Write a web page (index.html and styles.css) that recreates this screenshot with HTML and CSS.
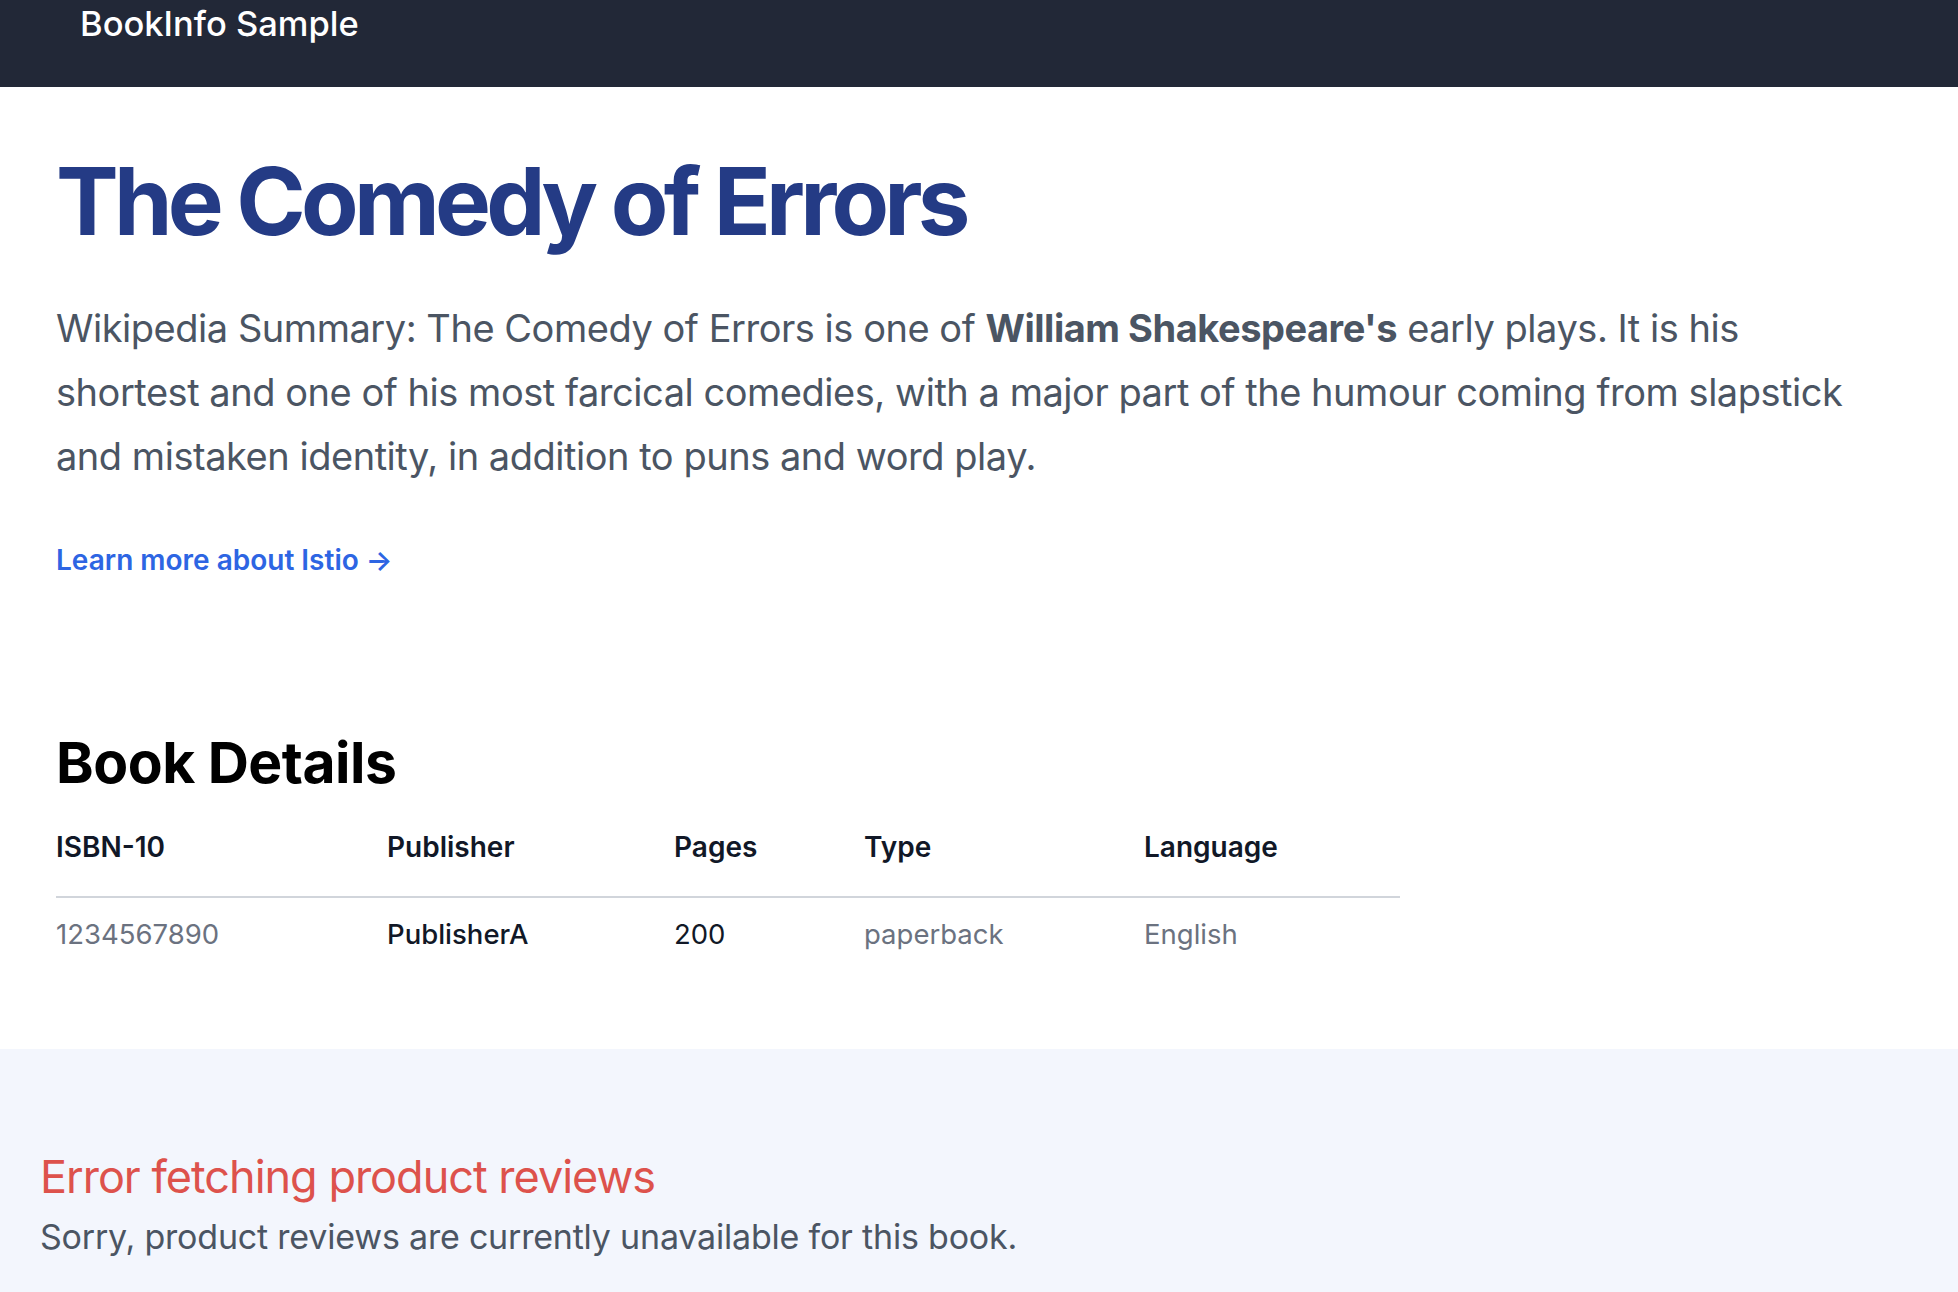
FILE: index.html
```html
<!DOCTYPE html>
<html lang="en">
<head>
<meta charset="utf-8">
<title>BookInfo Sample</title>
<link rel="stylesheet" href="styles.css">
</head>
<body>
<header class="navbar">
  <span class="brand">BookInfo Sample</span>
</header>
<main class="product">
  <h1 class="title">The Comedy of Errors</h1>
  <p class="summary">Wikipedia Summary: The Comedy of Errors is one of <strong>William Shakespeare's</strong> early plays. It is his shortest and one of his most farcical comedies, with a major part of the humour coming from slapstick and mistaken identity, in addition to puns and word play.</p>
  <a class="learn" href="#">Learn more about Istio <span class="arrow">→</span></a>
  <h2 class="details-title">Book Details</h2>
  <table class="details">
    <colgroup>
      <col class="c1"><col class="c2"><col class="c3"><col class="c4"><col class="c5">
    </colgroup>
    <thead>
      <tr><th>ISBN-10</th><th>Publisher</th><th>Pages</th><th>Type</th><th>Language</th></tr>
    </thead>
    <tbody>
      <tr><td class="muted">1234567890</td><td class="strong">PublisherA</td><td class="dark">200</td><td class="muted">paperback</td><td class="muted">English</td></tr>
    </tbody>
  </table>
</main>
<section class="reviews">
  <h3 class="error">Error fetching product reviews</h3>
  <p class="sorry">Sorry, product reviews are currently unavailable for this book.</p>
</section>
</body>
</html>
```

FILE: styles.css
```css
html, body {
  margin: 0;
  padding: 0;
}
html {
  height: 100%;
}
body {
  min-height: 100%;
  font-family: Inter, "Noto Sans", "Liberation Sans", sans-serif;
  background: #ffffff;
  display: flex;
  flex-direction: column;
}
.navbar {
  flex-shrink: 0;
  background: #222837;
  height: 87px;
  box-sizing: border-box;
  padding: 7px 0 0 80px;
}
.brand {
  display: block;
  color: #ffffff;
  font-size: 34.5px;
  font-weight: 500;
  line-height: 34px;
  letter-spacing: 0;
}
.product {
  flex-shrink: 0;
  padding: 66px 56px 95px 56px;
}
.title {
  margin: 0;
  font-size: 94px;
  line-height: 96px;
  font-weight: 700;
  letter-spacing: -0.051em;
  color: #243b85;
}
.summary {
  margin: 47px 0 0 0;
  max-width: 1794px;
  font-size: 38px;
  line-height: 64px;
  color: #4b5563;
  letter-spacing: -0.47px;
}
.summary strong {
  font-weight: 700;
}
.learn {
  display: inline-block;
  margin-top: 52px;
  font-size: 28px;
  line-height: 40px;
  font-weight: 600;
  color: #2d65e3;
  text-decoration: none;
}
.details-title {
  margin: 153px 0 0 0;
  font-size: 57px;
  line-height: 60px;
  font-weight: 700;
  color: #000000;
  letter-spacing: -0.5px;
}
.details {
  margin-top: 34px;
  width: 1344px;
  border-collapse: collapse;
  table-layout: fixed;
  font-size: 28px;
  line-height: 40px;
}
.c1 { width: 331px; }
.c2 { width: 287px; }
.c3 { width: 190px; }
.c4 { width: 280px; }
.c5 { width: 256px; }
.details th {
  text-align: left;
  font-weight: 600;
  color: #111827;
  padding: 0 0 29px 0;
  border-bottom: 2px solid #d1d5db;
}
.details td {
  padding: 16px 0 0 0;
  font-size: 27.5px;
}
.muted { color: #6b7280; }
.dark { color: #111827; }
.strong { color: #111827; font-weight: 500; }
.reviews {
  flex: 1 0 auto;
  background: #f3f6fd;
  padding: 100px 40px 40px 40px;
}
.error {
  margin: 0;
  font-size: 45px;
  line-height: 56px;
  font-weight: 400;
  color: #dd524c;
  letter-spacing: -1px;
}
.sorry {
  margin: 8px 0 0 0;
  font-size: 34px;
  line-height: 48px;
  color: #4b5563;
  letter-spacing: -0.2px;
}
```
